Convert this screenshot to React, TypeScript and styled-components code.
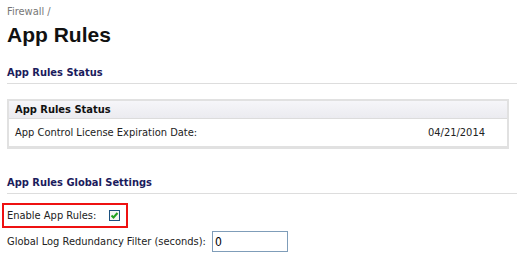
import styled, { createGlobalStyle } from "styled-components";

const GlobalStyle = createGlobalStyle`
  body {
    margin: 0;
    background: #ffffff;
    font-family: "DejaVu Sans Condensed", "DejaVu Sans", Verdana, sans-serif;
    font-size: 11px;
    color: #222222;
  }
`;

export default function App() {
  return (
    <>
      <GlobalStyle />
      <S.Page>
        <S.Crumb>Firewall /</S.Crumb>
        <S.Title>App Rules</S.Title>

        <S.Section>
          <S.SectionTitle>App Rules Status</S.SectionTitle>
        </S.Section>

        <S.Box>
          <S.BoxHead>App Rules Status</S.BoxHead>
          <S.BoxRow>
            <span>App Control License Expiration Date:</span>
            <span>04/21/2014</span>
          </S.BoxRow>
        </S.Box>

        <S.Section $top={27}>
          <S.SectionTitle>App Rules Global Settings</S.SectionTitle>
        </S.Section>

        <S.Highlight>
          <S.Label>Enable App Rules:</S.Label>
          <S.Check>
            <svg width="9" height="9" viewBox="0 0 9 9">
              <path d="M1.5 4.5 L3.5 6.5 L7.5 2" fill="none" stroke="#21a121" strokeWidth="2" />
            </svg>
          </S.Check>
        </S.Highlight>

        <S.Field>
          <S.Label>Global Log Redundancy Filter (seconds):</S.Label>
          <S.Input defaultValue="0" />
        </S.Field>
      </S.Page>
    </>
  );
}

const S = {
  Page: styled.div`
    width: 517px;
    height: 266px;
    overflow: hidden;
    padding-top: 5px;
    box-sizing: border-box;
    white-space: nowrap;
  `,
  Crumb: styled.div`
    margin-left: 7px;
    color: #777777;
    font-size: 11px;
    line-height: 14px;
  `,
  Title: styled.h1`
    margin: 4px 0 0 7px;
    font-family: "Liberation Sans", Arial, sans-serif;
    font-weight: bold;
    font-size: 21px;
    line-height: 24px;
    color: #111111;
  `,
  Section: styled.div<{ $top?: number }>`
    margin: ${({ $top }) => $top ?? 19}px 0 0 7px;
    border-bottom: 1px solid #dddddd;
    padding-bottom: 3px;
  `,
  SectionTitle: styled.div`
    font-weight: bold;
    font-size: 11px;
    line-height: 14px;
    color: #1b1b5c;
  `,
  Box: styled.div`
    margin: 15px 0 0 7px;
    width: 502px;
    box-sizing: border-box;
    border: 2px solid #e1e1e1;
    border-bottom-width: 3px;
  `,
  BoxHead: styled.div`
    height: 17px;
    line-height: 17px;
    padding-left: 6px;
    font-weight: bold;
    color: #111111;
    background: linear-gradient(#f6f6f9, #ebebf0);
    border-bottom: 1px solid #dcdcdc;
  `,
  BoxRow: styled.div`
    display: flex;
    justify-content: space-between;
    align-items: center;
    height: 27px;
    padding: 0 22px 0 6px;
    background: #ffffff;
  `,
  Highlight: styled.div`
    display: flex;
    align-items: center;
    margin: 9px 0 0 2px;
    width: 126px;
    height: 25px;
    box-sizing: border-box;
    border: 2px solid #ee1111;
    padding-left: 3px;
  `,
  Label: styled.span`
    line-height: 14px;
  `,
  Check: styled.span`
    display: inline-flex;
    align-items: center;
    justify-content: center;
    margin-left: 13px;
    width: 11px;
    height: 11px;
    box-sizing: border-box;
    border: 1px solid #1c5180;
    background: #f4f4f4;
  `,
  Field: styled.div`
    display: flex;
    align-items: center;
    margin: 3px 0 0 7px;
  `,
  Input: styled.input`
    margin-left: 6px;
    width: 76px;
    height: 21px;
    box-sizing: border-box;
    border: 1px solid #7f9db9;
    padding: 0 2px;
    font-family: "DejaVu Sans Condensed", "DejaVu Sans", Verdana, sans-serif;
    font-size: 12px;
    color: #000000;
    outline: none;
  `,
};
